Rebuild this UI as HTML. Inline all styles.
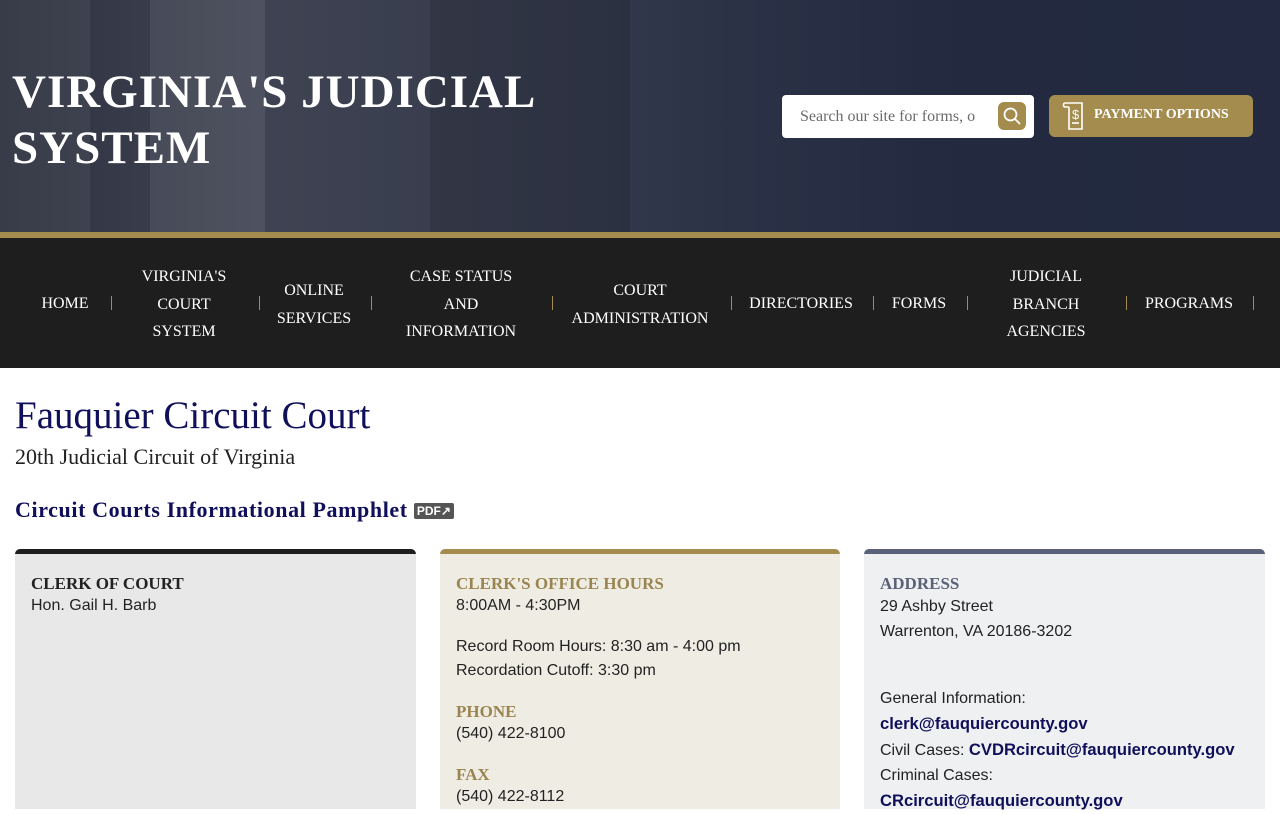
<!DOCTYPE html>
<html><head><meta charset="utf-8"><style>
*{box-sizing:border-box;margin:0;padding:0}
body{width:1280px;height:800px;overflow:hidden;background:#fff;font-family:"Liberation Serif",serif}
.hdr{position:absolute;left:0;top:0;width:1280px;height:232px;background:linear-gradient(90deg,#2e3240 0%,#3f4352 20%,#343a4c 45%,#2a3045 60%,#232a40 75%,#222940 100%)}
.hdr .col{position:absolute;top:0;height:232px;background:rgba(255,255,255,.06)}
.title{position:absolute;left:12px;top:64px;color:#fff;font-size:47px;font-weight:bold;line-height:56px;letter-spacing:1px}
.gold{position:absolute;left:0;top:232px;width:1280px;height:6px;background:#a38c4e}
.nav{position:absolute;left:0;top:238px;width:1280px;height:130px;background:#1e1e1e;color:#fff;font-size:16px}
.nav div{position:absolute;text-align:center;line-height:27.5px;transform:translateX(-50%)}
.search{position:absolute;left:782px;top:95px;width:252px;height:43px;background:#fff;border-radius:4px;color:#6b6b6b;font-size:16px;padding:13px 0 0 18px}
.sbtn{position:absolute;left:998px;top:102px;width:28px;height:28px;background:#a38c4e;border-radius:6px}
.pay{position:absolute;left:1049px;top:95px;width:204px;height:42px;background:#a38c4e;border-radius:6px;color:#fff;font-weight:bold;font-size:14px;padding:12px 0 0 45px}
h1{position:absolute;left:15px;top:393px;color:#10105a;font-size:39px;font-weight:normal}
.sub{position:absolute;left:15px;top:444px;color:#222;font-size:22px}
.pam{position:absolute;left:15px;top:497px;color:#10105a;font-size:22px;font-weight:bold;letter-spacing:.6px}
.pdf{display:inline-block;background:#555;color:#fff;font-family:"Liberation Sans",sans-serif;font-size:12px;padding:1px 3px;border-radius:2px;vertical-align:2px;letter-spacing:0}
.card{position:absolute;top:549px;height:260px;border-radius:5px 5px 0 0;padding:18px 16px;font-family:"Liberation Sans",sans-serif;font-size:16px;color:#222;line-height:24px}
.card b{font-family:"Liberation Serif",serif;font-size:17px;display:block;line-height:20px;margin-top:2px}
.card a{color:#10105a;font-weight:bold;text-decoration:none;font-size:16.6px}
</style></head><body>
<div class="hdr">
<div class="col" style="left:0;width:90px;background:rgba(255,255,255,.05)"></div>
<div class="col" style="left:150px;width:115px;background:rgba(255,255,255,.08)"></div>
<div class="col" style="left:430px;width:200px;background:rgba(0,0,0,.12)"></div>
</div>
<div class="title">VIRGINIA'S JUDICIAL<br>SYSTEM</div>
<div class="search">Search our site for forms, o</div>
<div class="sbtn"><svg width="28" height="28" viewBox="0 0 28 28" fill="none" stroke="#fff" stroke-width="1.8"><circle cx="12.5" cy="12.5" r="6"/><path d="M17 17l5 5"/></svg></div>
<div class="pay">PAYMENT OPTIONS</div>
<svg style="position:absolute;left:1062px;top:101px" width="28" height="30" viewBox="0 0 28 30" fill="none" stroke="#fff" stroke-width="1.6"><path d="M3 2h17v26H7V6M3 2c-2 0-2 4 0 4h4"/><text x="10" y="18" fill="#fff" stroke="none" font-size="13" font-family="Liberation Sans">$</text><path d="M10 22h7"/></svg>
<div class="gold"></div>
<div class="nav">
<div style="left:65px;top:52px">HOME</div>
<div style="left:184px;top:25px">VIRGINIA'S<br>COURT<br>SYSTEM</div>
<div style="left:314px;top:39px">ONLINE<br>SERVICES</div>
<div style="left:461px;top:25px">CASE STATUS<br>AND<br>INFORMATION</div>
<div style="left:640px;top:39px">COURT<br>ADMINISTRATION</div>
<div style="left:801px;top:52px">DIRECTORIES</div>
<div style="left:919px;top:52px">FORMS</div>
<div style="left:1046px;top:25px">JUDICIAL<br>BRANCH<br>AGENCIES</div>
<div style="left:1189px;top:52px">PROGRAMS</div>
</div>
<i style="position:absolute;top:296px;left:111px;width:1px;height:14px;background:#a38c4e"></i>
<i style="position:absolute;top:296px;left:259px;width:1px;height:14px;background:#a38c4e"></i>
<i style="position:absolute;top:296px;left:371px;width:1px;height:14px;background:#a38c4e"></i>
<i style="position:absolute;top:296px;left:552px;width:1px;height:14px;background:#a38c4e"></i>
<i style="position:absolute;top:296px;left:731px;width:1px;height:14px;background:#a38c4e"></i>
<i style="position:absolute;top:296px;left:873px;width:1px;height:14px;background:#a38c4e"></i>
<i style="position:absolute;top:296px;left:967px;width:1px;height:14px;background:#a38c4e"></i>
<i style="position:absolute;top:296px;left:1126px;width:1px;height:14px;background:#a38c4e"></i>
<i style="position:absolute;top:296px;left:1253px;width:1px;height:14px;background:#a38c4e"></i>
<h1>Fauquier Circuit Court</h1>
<div class="sub">20th Judicial Circuit of Virginia</div>
<div class="pam">Circuit Courts Informational Pamphlet <span class="pdf">PDF↗</span></div>
<div class="card" style="left:15px;width:401px;background:#e8e8e8;border-top:5px solid #1e1e1e"><b style="color:#222">CLERK OF COURT</b>Hon. Gail H. Barb</div>
<div class="card" style="left:440px;width:400px;background:#efede3;border-top:5px solid #a38c4e"><b style="color:#9a8450">CLERK'S OFFICE HOURS</b>8:00AM - 4:30PM<div style="height:17px"></div>Record Room Hours: 8:30 am - 4:00 pm<br>Recordation Cutoff: 3:30 pm<div style="height:17px"></div><b style="color:#9a8450">PHONE</b>(540) 422-8100<div style="height:17px"></div><b style="color:#9a8450">FAX</b>(540) 422-8112</div>
<div class="card" style="left:864px;width:401px;background:#eff0f2;border-top:5px solid #5a6178;line-height:25px"><b style="color:#5a6178">ADDRESS</b>29 Ashby Street<br>Warrenton, VA 20186-3202<div style="height:42px"></div>General Information:<br><a>clerk@fauquiercounty.gov</a><br>Civil Cases: <a>CVDRcircuit@fauquiercounty.gov</a><br>Criminal Cases:<br><a>CRcircuit@fauquiercounty.gov</a></div>
</body></html>
